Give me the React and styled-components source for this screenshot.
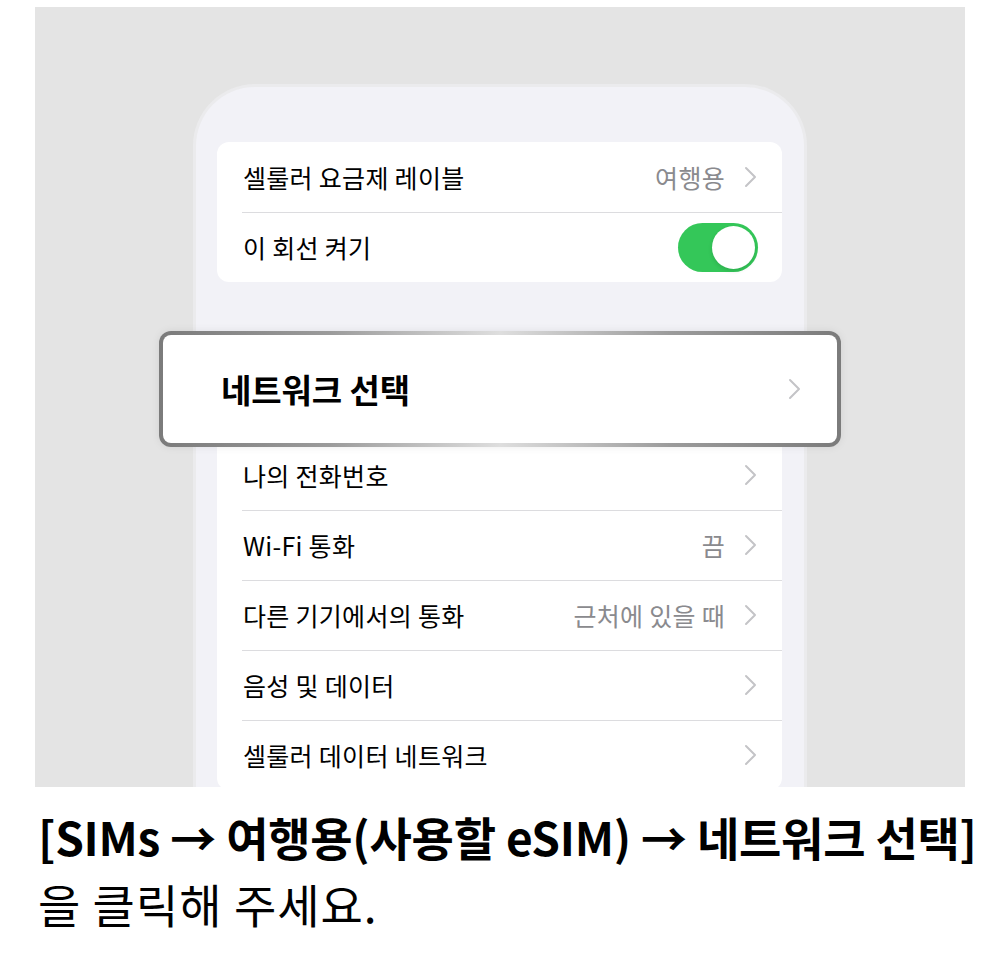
import React from "react";
import styled, { createGlobalStyle } from "styled-components";

const GlobalStyle = createGlobalStyle`
  html, body {
    margin: 0;
    padding: 0;
    background: #ffffff;
  }
  body {
    font-family: "Noto Sans CJK KR", "Noto Sans", sans-serif;
    color: #000;
  }
`;

const Page = styled.div`
  width: 1000px;
  padding-top: 7px;
`;

const Stage = styled.div`
  position: relative;
  margin: 0 35px;
  height: 780px;
  background: #e4e4e4;
  overflow: hidden;
  display: flex;
  justify-content: center;
  padding-top: 77px;
  box-sizing: border-box;
`;

const Phone = styled.div`
  width: 614px;
  height: 760px;
  box-sizing: border-box;
  border: 3px solid #ebebed;
  border-bottom: none;
  border-radius: 62px 62px 0 0;
  background: #f2f2f7;
  padding: 55px 22px 0 21px;
  display: flex;
  flex-direction: column;
  gap: 88px;
  flex-shrink: 0;
`;

const Card = styled.div`
  background: #ffffff;
  border-radius: 12px;
  overflow: hidden;
`;

const Row = styled.div`
  height: 70px;
  display: flex;
  align-items: center;
  padding: 0 25px 0 26px;
  box-sizing: border-box;
  position: relative;
  font-size: 25px;
  letter-spacing: 0.3px;
  color: #000;

  & > * {
    visibility: ${({ $covered }) => ($covered ? "hidden" : "visible")};
  }

  & + & {
    &::before {
      content: "";
      position: absolute;
      top: 0;
      left: 25px;
      right: 0;
      height: 1px;
      background: #dcdcdf;
    }
  }
`;

const Label = styled.span`
  flex: 1;
  white-space: nowrap;
`;

const Value = styled.span`
  color: #8a8a8e;
  margin-right: 19px;
  white-space: nowrap;
`;

const ChevronSvg = styled.svg`
  flex-shrink: 0;
  display: block;
`;

const Chevron = () => (
  <ChevronSvg width={13} height={22} viewBox="0 0 13 22">
    <polyline
      points="2,2 11,11 2,20"
      fill="none"
      stroke="#c4c4c7"
      strokeWidth="2"
      strokeLinecap="round"
      strokeLinejoin="round"
    />
  </ChevronSvg>
);

const Toggle = styled.div`
  width: 80px;
  height: 49px;
  border-radius: 25px;
  background: #34c759;
  position: relative;
  flex-shrink: 0;
  margin-right: -1px;

  &::after {
    content: "";
    position: absolute;
    top: 3px;
    right: 3px;
    width: 43px;
    height: 43px;
    border-radius: 50%;
    background: #ffffff;
    box-shadow: 0 2px 4px rgba(0, 0, 0, 0.12);
  }
`;

/* Callout frame laid over the "네트워크 선택" row */
const Highlight = styled.div`
  position: absolute;
  left: 124px;
  top: 324px;
  width: 682px;
  height: 116px;
  box-sizing: border-box;
  border: 4px solid transparent;
  border-radius: 12px;
  background:
    linear-gradient(#ffffff, #ffffff) padding-box,
    linear-gradient(
        90deg,
        #7b7b7b 0%,
        #9b9b9b 25%,
        #dedede 50%,
        #9b9b9b 75%,
        #7b7b7b 100%
      )
      border-box;
  box-shadow: 0 0 8px rgba(0, 0, 0, 0.08);
  display: flex;
  align-items: center;
  padding: 0 36px 0 58px;
`;

const HighlightLabel = styled.span`
  flex: 1;
  font-size: 33px;
  font-weight: 700;
  letter-spacing: -0.1px;
  color: #000;
`;

const Caption = styled.div`
  padding: 16px 0 0 38px;
  line-height: 67px;
  font-size: 46px;
  white-space: nowrap;
`;

const CaptionStrong = styled.div`
  font-weight: 700;
  letter-spacing: -0.25px;
`;

const CaptionPlain = styled.div`
  font-weight: 400;
  letter-spacing: 1px;
`;

const topRows = [
  { label: "셀룰러 요금제 레이블", value: "여행용", chevron: true },
  { label: "이 회선 켜기", toggle: true },
];

const networkRows = [
  { label: "네트워크 선택", chevron: true, covered: true },
  { label: "나의 전화번호", chevron: true },
  { label: "Wi-Fi 통화", value: "끔", chevron: true },
  { label: "다른 기기에서의 통화", value: "근처에 있을 때", chevron: true },
  { label: "음성 및 데이터", chevron: true },
  { label: "셀룰러 데이터 네트워크", chevron: true },
];

const SettingRow = ({ label, value, chevron, toggle, covered }) => (
  <Row $covered={covered}>
    <Label>{label}</Label>
    {value && <Value>{value}</Value>}
    {chevron && <Chevron />}
    {toggle && <Toggle />}
  </Row>
);

export default function App() {
  return (
    <Page>
      <GlobalStyle />
      <Stage>
        <Phone>
          <Card>
            {topRows.map((r) => (
              <SettingRow key={r.label} {...r} />
            ))}
          </Card>
          <Card>
            {networkRows.map((r) => (
              <SettingRow key={r.label} {...r} />
            ))}
          </Card>
        </Phone>
        <Highlight>
          <HighlightLabel>네트워크 선택</HighlightLabel>
          <Chevron />
        </Highlight>
      </Stage>
      <Caption>
        <CaptionStrong>[SIMs → 여행용(사용할 eSIM) → 네트워크 선택]</CaptionStrong>
        <CaptionPlain>을 클릭해 주세요.</CaptionPlain>
      </Caption>
    </Page>
  );
}
